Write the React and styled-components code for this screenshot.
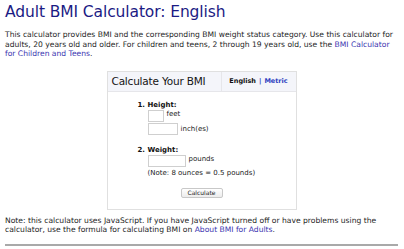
import { createGlobalStyle, styled } from "styled-components";

const GlobalStyle = createGlobalStyle`
  html, body {
    margin: 0;
    padding: 0;
    background: #ffffff;
  }
  body {
    font-family: "DejaVu Sans", Verdana, sans-serif;
  }
`;

const Page = styled.div`
  width: 404px;
  height: 249px;
  padding: 3px 6px 0 5px;
  box-sizing: border-box;
  overflow: hidden;
`;

const Title = styled.h1`
  margin: 0;
  font-family: "DejaVu Sans", Verdana, sans-serif;
  font-weight: normal;
  font-size: 15.5px;
  line-height: 19px;
  color: #1b1b84;
  letter-spacing: -0.1px;
`;

const Text = styled.p`
  margin: ${(p) => p.$top || 0}px 0 0 0;
  font-size: 7.6px;
  line-height: 9.6px;
  color: #1e1e1e;
`;

const Link = styled.a`
  color: #3b35b0;
  text-decoration: none;
`;

const CalcBox = styled.div`
  width: 190px;
  margin: 12px auto 0 auto;
  border: 1px solid #e0e0e0;
  box-sizing: border-box;
`;

const CalcHeader = styled.div`
  display: grid;
  grid-template-columns: 114px 1fr;
  height: 19px;
  background: #f4f5fa;
  border-bottom: 1px solid #e6e6ea;
`;

const CalcTitle = styled.div`
  display: flex;
  align-items: center;
  padding-left: 4px;
  font-size: 10.5px;
  color: #141414;
  border-right: 1px solid #e6e6ea;
  letter-spacing: -0.2px;
`;

const Units = styled.div`
  display: flex;
  align-items: center;
  justify-content: center;
  gap: 3px;
  font-size: 6.5px;
  font-weight: bold;
  color: #111;
`;

const UnitLink = styled.span`
  color: ${(p) => p.$active ? "#111" : "#2f3fc0"};
`;

const Sep = styled.span`
  color: #2f3fc0;
`;

const CalcBody = styled.div`
  padding: 9px 0 11px 30px;
  display: flex;
  flex-direction: column;
`;

const Label = styled.div`
  font-size: 7px;
  font-weight: bold;
  color: #111;
  line-height: 8px;
  margin-top: ${(p) => p.$top || 0}px;
`;

const FieldRow = styled.div`
  display: flex;
  align-items: center;
  gap: 3px;
  margin-left: 10px;
  margin-top: 1px;
`;

const Input = styled.div`
  width: ${(p) => p.$w}px;
  height: 12px;
  border: 1px solid #cfcfcf;
  box-sizing: border-box;
  background: #fff;
`;

const Unit = styled.span`
  font-size: 7px;
  color: #222;
  margin-top: ${(p) => p.$up ? "-4px" : "0"};
`;

const Hint = styled.div`
  margin: 2px 0 0 10px;
  font-size: 7px;
  color: #222;
`;

const ButtonWrap = styled.div`
  display: flex;
  justify-content: center;
  margin: 11px 30px 0 0;
`;

const Button = styled.div`
  width: 42px;
  height: 10px;
  border: 1px solid #c8c8c8;
  border-radius: 2px;
  background: linear-gradient(#ffffff, #ececec);
  font-size: 6px;
  color: #222;
  display: flex;
  align-items: center;
  justify-content: center;
  box-sizing: border-box;
`;

const Rule = styled.div`
  margin-top: 9px;
  height: 2px;
  background: #a9a9a9;
`;

export default function App() {
  return (
    <>
      <GlobalStyle />
      <Page>
        <Title>Adult BMI Calculator: English</Title>
        <Text $top={8}>
          This calculator provides BMI and the corresponding BMI weight status
          category. Use this calculator for adults, 20 years old and older. For
          children and teens, 2 through 19 years old, use the{" "}
          <Link>BMI Calculator for Children and Teens</Link>.
        </Text>
        <CalcBox>
          <CalcHeader>
            <CalcTitle>Calculate Your BMI</CalcTitle>
            <Units>
              <UnitLink $active>English</UnitLink>
              <Sep>|</Sep>
              <UnitLink>Metric</UnitLink>
            </Units>
          </CalcHeader>
          <CalcBody>
            <Label>1. Height:</Label>
            <FieldRow>
              <Input $w={16} />
              <Unit $up>feet</Unit>
            </FieldRow>
            <FieldRow>
              <Input $w={30} />
              <Unit>inch(es)</Unit>
            </FieldRow>
            <Label $top={11}>2. Weight:</Label>
            <FieldRow>
              <Input $w={38} />
              <Unit $up>pounds</Unit>
            </FieldRow>
            <Hint>(Note: 8 ounces = 0.5 pounds)</Hint>
            <ButtonWrap>
              <Button>Calculate</Button>
            </ButtonWrap>
          </CalcBody>
        </CalcBox>
        <Text $top={6}>
          Note: this calculator uses JavaScript. If you have JavaScript turned off
          or have problems using the calculator, use the formula for calculating
          BMI on <Link>About BMI for Adults</Link>.
        </Text>
        <Rule />
      </Page>
    </>
  );
}
